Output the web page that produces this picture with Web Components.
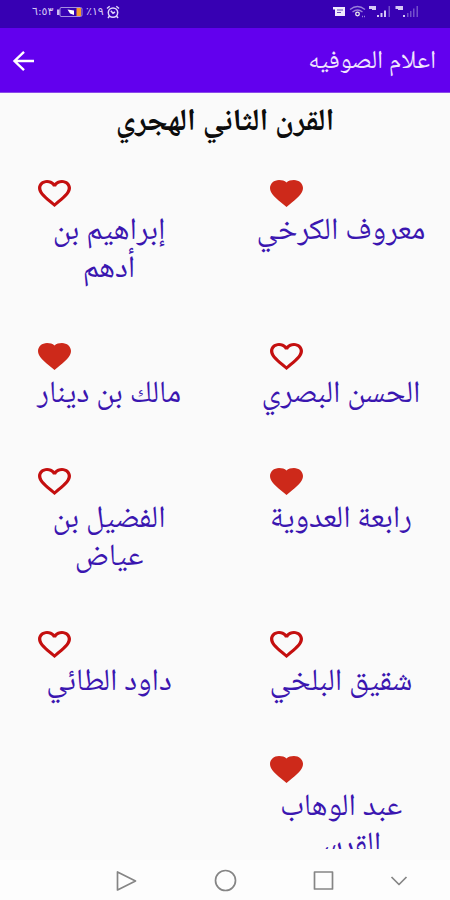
<!DOCTYPE html>
<html lang="ar">
<head>
<meta charset="utf-8">
<title>اعلام الصوفيه</title>
<style>
body{margin:0;background:#fafafa;font-family:'Noto Naskh Arabic','DejaVu Sans',sans-serif}
</style>
</head>
<body>
<saints-app></saints-app>
<script>
const define=(name,html,setup)=>customElements.define(name,class extends HTMLElement{
  connectedCallback(){
    if(this.shadowRoot)return;
    const t=document.createElement('template');
    t.innerHTML=html;
    this.attachShadow({mode:'open'}).append(t.content.cloneNode(true));
    if(setup)setup(this,this.shadowRoot);
  }
});

define('status-bar',`<style>
:host{display:flex;justify-content:space-between;height:28px;box-sizing:border-box;padding:0 32px 4px;background:#3700b3;color:#d6c9f5;direction:ltr;align-items:center;font:11px/12px 'DejaVu Sans',sans-serif}
div{display:flex;align-items:center}
bdo{display:block;white-space:nowrap}
svg{display:block}
</style>
<div>
 <bdo dir="ltr" style="width:25px">٦:٥٣</bdo>
 <svg width="26" height="12" viewBox="0 0 26 12"><path d="M4 1.5H23.5Q25 1.5 25 3V9Q25 10.5 23.5 10.5H4Q3 10.5 3 9V3Q3 1.5 4 1.5Z" fill="none" stroke="#a68fe0"/><rect x="0" y="3.5" width="2.5" height="5.500" fill="#cbbcf0"/><rect x="19.500" y="2" width="4.500" height="8" fill="#f39a2b"/><path d="M10.500 3.500L17 4.500V9L13 7.500Z" fill="#fff"/></svg>
 <bdo dir="ltr" style="width:20px;margin-left:3px">٪١٩</bdo>
 <svg width="14" height="14" viewBox="0 0 14 14" fill="none" stroke="#e0d6fa" stroke-width="1.500"><circle cx="7" cy="7.600" r="4.700"/><path d="M1 3.500L3.700 1.200M13 3.500L10.300 1.200M3.500 11L2 13M10.500 11L12 13M4.800 5.700L7 8.200L9 7"/></svg>
</div>
<svg width="86" height="16" viewBox="0 0 86 16" style="margin-right:-1px">
 <path d="M0 3H12V12H2V5.500H0Z" fill="#efe9fd"/><path d="M4 6H10M4 8.500H8" stroke="#6545bd"/>
 <g fill="none" stroke="#9a7fdb" stroke-width="1.300"><path d="M17 5.500Q24.500 -.5 32 5.500M19.500 8Q24.500 4 29.500 8"/><circle cx="24.500" cy="10" r="1.800" stroke="#eee"/><path d="M29 12.500H32" stroke-dasharray="1"/></g>
 <g fill="#d5c8f5"><path d="M36 2H43V6H39V5H36ZM62.500 2H70V6H65V5H62.500Z"/><rect x="44" y="11" width="2" height="2"/><rect x="47.500" y="9" width="2" height="4"/><rect x="51" y="6.500" width="2" height="6.500"/><rect x="70" y="11" width="2" height="2"/></g>
 <g fill="#7350cb"><rect x="55.500" y="2" width="1.500" height="11"/><rect x="74" y="9" width="1.500" height="4"/><rect x="77" y="7" width="1.500" height="6"/><rect x="80" y="4.500" width="1.500" height="8.500"/><rect x="83.500" y="2" width="1.500" height="11"/></g>
</svg>`);

define('app-bar',`<style>
:host{display:flex;direction:rtl;align-items:center;justify-content:space-between;height:65px;box-sizing:border-box;padding:1px 14px 0 12px;background:#6200ee;color:#efe5fd;border-bottom:1px solid #8a4be9}
h1{margin:0;padding-top:4px;font-size:25.6px;font-weight:400;line-height:40px;white-space:nowrap}
svg{display:block}
</style><h1><slot></slot></h1>
<svg width="23" height="22" viewBox="0 0 23 22" fill="none" stroke="#fff" stroke-width="2.400"><path d="M22 11H2.500M12 1.800L2.500 11L12 20.200"/></svg>`);

define('heart-icon',`<style>
:host{display:block;width:33px;height:27px}
svg{display:block}
path{fill:#c40f0f}
:host([full]) path{fill:#cd291a}
</style><svg width="33" height="27" viewBox="2 3 20 18.350" preserveAspectRatio="none"><path/></svg>`,(h,r)=>{
  const outer='M12 21.350l-1.450-1.320C5.400 15.360 2 12.280 2 8.500 2 5.420 4.420 3 7.500 3c1.740 0 3.410.5 4.500 1.700C13.090 3.500 14.760 3 16.500 3 19.580 3 22 5.420 22 8.500c0 3.780-3.400 6.860-8.550 11.540L12 21.350z';
  const line='M16.500 3c-1.740 0-3.410.810-4.500 2.090C10.910 3.810 9.240 3 7.500 3 4.420 3 2 5.420 2 8.500c0 3.780 3.400 6.860 8.550 11.540L12 21.350l1.450-1.320C18.600 15.360 22 12.280 22 8.500 22 5.420 19.580 3 16.500 3zm-4.400 15.550l-.1.100-.1-.1C7.140 14.240 4 11.390 4 8.500 4 6.500 5.500 5 7.500 5c1.540 0 3.040.990 3.570 2.360h1.870C13.460 5.990 14.960 5 16.500 5c2 0 3.500 1.500 3.500 3.500 0 2.890-3.140 5.740-7.900 10.050z';
  r.querySelector('path').setAttribute('d',h.hasAttribute('full')?outer:line);
});

define('saint-card',`<style>
:host{display:flex;flex-direction:column;direction:ltr;padding-bottom:53px}
heart-icon{margin:0 0 7px 14px}
p{margin:0;direction:rtl;text-align:center;font-size:31px;line-height:38px;color:#3a16b0}
</style><heart-icon></heart-icon><p><slot></slot></p>`,(h,r)=>{
  if(h.hasAttribute('liked'))r.querySelector('heart-icon').replaceWith(Object.assign(document.createElement('template'),{innerHTML:'<heart-icon full></heart-icon>'}).content);
});

define('nav-bar',`<style>
:host{display:grid;grid-template-columns:98px 99px 75px;justify-content:start;justify-items:center;direction:ltr;align-items:center;height:40px;box-sizing:border-box;padding:1px 0 0 77px;grid-auto-flow:column;grid-auto-columns:76px;background:#fdfdfd}
:host{grid-template-columns:98px 100px 97px 54px}
svg{display:block;fill:none;stroke:#858585;stroke-width:1.700;stroke-linejoin:round}
</style>
<svg width="21" height="22" viewBox="0 0 21 22"><path d="M1.500 2V20L19.500 11Z"/></svg>
<svg width="23" height="23" viewBox="0 0 23 23"><circle cx="11.500" cy="11.500" r="10"/></svg>
<svg width="21" height="21" viewBox="0 0 21 21"><rect x="1.500" y="2" width="18" height="17"/></svg>
<svg width="18" height="12" viewBox="0 0 18 12"><path d="M1.500 2L9 9.500L16.500 2"/></svg>`);

define('saints-app',`<style>
:host{display:flex;flex-direction:column;height:900px;width:450px;direction:rtl;overflow:hidden}
main{height:756px;margin-bottom:11px;overflow:hidden}
h2{margin:12px 0 37px;text-align:center;font-size:31px;line-height:38px;font-weight:700;color:#0c0c0c}
section{display:grid;grid-template-columns:170px 170px;column-gap:62px;padding:0 24px}
</style>
<status-bar></status-bar>
<app-bar>اعلام الصوفيه</app-bar>
<main>
<h2>القرن الثاني الهجري</h2>
<section>
<saint-card liked>معروف الكرخي</saint-card>
<saint-card>إبراهيم بن أدهم</saint-card>
<saint-card>الحسن البصري</saint-card>
<saint-card liked>مالك بن دينار</saint-card>
<saint-card liked>رابعة العدوية</saint-card>
<saint-card>الفضيل بن عياض</saint-card>
<saint-card>شقيق البلخي</saint-card>
<saint-card>داود الطائي</saint-card>
<saint-card liked>عبد الوهاب القرسي</saint-card>
</section>
</main>
<nav-bar></nav-bar>`);
</script>
</body>
</html>
